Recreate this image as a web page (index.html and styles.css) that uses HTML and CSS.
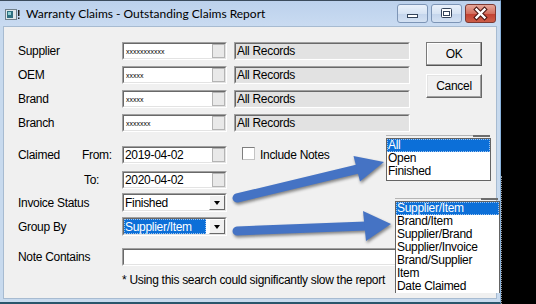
FILE: index.html
```html
<!DOCTYPE html>
<html lang="en">
<head>
    <meta charset="UTF-8">
    <title>Warranty Claims - Outstanding Claims Report</title>
    <link rel="stylesheet" href="styles.css">
</head>
<body>
    <div class="window">
        <div class="titlebar">
            <svg class="app-icon" width="16" height="12" viewBox="0 0 16 12">
                <rect x="0.5" y="0.5" width="11" height="10" fill="#dfe6ea" stroke="#6f7f8a"/>
                <rect x="2" y="2" width="6" height="7" fill="#2f6f80"/>
                <rect x="3" y="3" width="3" height="3" fill="#8fd0d4"/>
                <rect x="13" y="1" width="1.5" height="6" fill="#222"/>
                <rect x="13" y="8.5" width="1.5" height="1.5" fill="#222"/>
            </svg>
            <span class="title">Warranty Claims - Outstanding Claims Report</span>
            <div class="caption">
                <span class="cap-btn">
                    <svg width="29" height="17" viewBox="0 0 29 17"><rect x="9.5" y="9.5" width="10" height="3" fill="#fff" stroke="#33435a"/></svg>
                </span>
                <span class="cap-btn">
                    <svg width="29" height="17" viewBox="0 0 29 17"><rect x="9.5" y="3.5" width="10" height="9" rx="1" fill="#fff" stroke="#33435a"/><rect x="11.5" y="6.5" width="6" height="4" fill="#fff" stroke="#33435a"/></svg>
                </span>
                <span class="cap-btn close">
                    <svg width="29" height="17" viewBox="0 0 29 17"><path d="M10.5 4.5 L18.5 12.5 M18.5 4.5 L10.5 12.5" stroke="#4a1712" stroke-width="4.5" stroke-linecap="square"/><path d="M10.5 4.5 L18.5 12.5 M18.5 4.5 L10.5 12.5" stroke="#fff" stroke-width="2.4" stroke-linecap="square"/></svg>
                </span>
            </div>
        </div>
        <div class="client">
            <div class="top">
                <div class="filters">
                    <div class="row">
                        <span class="label">Supplier</span>
                        <div class="sunken edit"><div class="inner"><span class="mask">xxxxxxxxxxx</span><span class="pick"></span></div></div>
                        <div class="sunken records"><div class="inner">All Records</div></div>
                    </div>
                    <div class="row">
                        <span class="label">OEM</span>
                        <div class="sunken edit"><div class="inner"><span class="mask">xxxxx</span><span class="pick"></span></div></div>
                        <div class="sunken records"><div class="inner">All Records</div></div>
                    </div>
                    <div class="row">
                        <span class="label">Brand</span>
                        <div class="sunken edit"><div class="inner"><span class="mask">xxxxx</span><span class="pick"></span></div></div>
                        <div class="sunken records"><div class="inner">All Records</div></div>
                    </div>
                    <div class="row">
                        <span class="label">Branch</span>
                        <div class="sunken edit"><div class="inner"><span class="mask">xxxxxxx</span><span class="pick"></span></div></div>
                        <div class="sunken records"><div class="inner">All Records</div></div>
                    </div>
                </div>
                <div class="buttons">
                    <div class="btn default">OK</div>
                    <div class="btn">Cancel</div>
                </div>
            </div>

            <div class="row claimed">
                <span class="label">Claimed</span>
                <span class="sub">From:</span>
                <div class="sunken edit"><div class="inner"><span class="value">2019-04-02</span><span class="pick"></span></div></div>
                <span class="check"></span>
                <span class="check-text">Include Notes</span>
            </div>
            <div class="row to-row">
                <span class="label"></span>
                <span class="sub">To:</span>
                <div class="sunken edit"><div class="inner"><span class="value">2020-04-02</span><span class="pick"></span></div></div>
            </div>

            <div class="row combo-row invoice">
                <span class="label">Invoice Status</span>
                <div class="sunken combo"><div class="inner"><span class="value">Finished</span><span class="drop"><i></i></span></div></div>
            </div>
            <div class="row combo-row group">
                <span class="label">Group By</span>
                <div class="sunken combo"><div class="inner"><span class="value selected">Supplier/Item</span><span class="drop"><i></i></span></div></div>
            </div>

            <div class="row note">
                <span class="label">Note Contains</span>
                <div class="sunken wide"><div class="inner"></div></div>
            </div>
            <p class="footnote">* Using this search could significantly slow the report</p>
        </div>
    </div>

    <svg class="arrows" width="536" height="304" viewBox="0 0 536 304">
        <g fill="#4573c4" stroke="#4573c4">
            <line x1="237" y1="198" x2="358" y2="169" stroke-width="9" stroke-linecap="round"/>
            <polygon points="353.5,156 384,162 360,181.5" stroke="none"/>
            <line x1="237" y1="231" x2="366" y2="226" stroke-width="9" stroke-linecap="round"/>
            <polygon points="363,211 391,224 366,241" stroke="none"/>
        </g>
    </svg>

    <span class="ghost status-ghost"></span>
    <ul class="droplist status-list">
        <li class="active">All</li>
        <li>Open</li>
        <li>Finished</li>
    </ul>

    <span class="ghost group-ghost"></span>
    <ul class="droplist group-list">
        <li class="active">Supplier/Item</li>
        <li>Brand/Item</li>
        <li>Supplier/Brand</li>
        <li>Supplier/Invoice</li>
        <li>Brand/Supplier</li>
        <li>Item</li>
        <li>Date Claimed</li>
    </ul>
    <span class="edge-dots"></span>
</body>
</html>
```

FILE: styles.css
```css
* {
    margin: 0;
    padding: 0;
    box-sizing: border-box;
}
body {
    position: relative;
    width: 536px;
    height: 304px;
    overflow: hidden;
    background: #000;
    font-family: "Liberation Sans", Arial, sans-serif;
    font-size: 12px;
    letter-spacing: -0.3px;
    color: #000;
}
.window {
    width: 501px;
    height: 304px;
    display: flex;
    flex-direction: column;
    background: #c8daee;
    border-top: 1px solid #3b4b5c;
    border-right: 1px solid #8ab3dd;
    border-bottom: 2px solid #2a566c;
}
.titlebar {
    height: 25px;
    flex: none;
    display: flex;
    align-items: center;
    padding: 0 4px 0 5px;
    background: linear-gradient(#bcd1ec, #c9dbf1);
}
.app-icon {
    flex: none;
    margin-top: 2px;
}
.title {
    margin-left: 5px;
    font-family: Lato, "Liberation Sans", sans-serif;
    font-size: 12px;
    letter-spacing: 0;
}
.caption {
    margin-left: auto;
    align-self: flex-start;
    margin-top: 3px;
    display: flex;
    gap: 3px;
}
.cap-btn {
    width: 31px;
    height: 19px;
    border: 1px solid #7d95b6;
    border-radius: 3px;
    background: linear-gradient(#eaf1fb, #d6e3f3 50%, #c3d4ec 51%, #d3e1f2);
}
.cap-btn svg {
    display: block;
}
.cap-btn.close {
    border-color: #7d3a33;
    background: linear-gradient(#e6a79a, #d3705f 50%, #c23f30 51%, #cd5e48);
}
.client {
    flex: 1;
    margin: 0 3px 3px 3px;
    background: #f0f0f0;
    border: 1px solid #a7bbd1;
    padding: 15px 0 0 14px;
    display: flex;
    flex-direction: column;
}
.top {
    display: flex;
}
.filters {
    display: flex;
    flex-direction: column;
    gap: 6px;
}
.row {
    display: flex;
    align-items: center;
    height: 18px;
}
.label {
    width: 104px;
    flex: none;
}
.sunken {
    flex: none;
    height: 100%;
    border: 1px solid;
    border-color: #a0a0a0 #fff #fff #a0a0a0;
}
.sunken .inner {
    height: 100%;
    display: flex;
    align-items: center;
    background: #fff;
    border: 1px solid;
    border-color: #696969 #e3e3e3 #e3e3e3 #696969;
}
.edit,
.combo {
    width: 105px;
}
.records {
    width: 176px;
    margin-left: 7px;
}
.records .inner {
    background: #e2e2e2;
    padding-left: 1px;
}
.wide {
    width: 288px;
}
.mask {
    font-family: "Liberation Sans", sans-serif;
    font-size: 7px;
    line-height: 7px;
    letter-spacing: 0;
    padding-left: 2px;
}
.pick {
    margin-left: auto;
    width: 13px;
    height: 100%;
    background: #e9e9e9;
    border: 1px solid #b4b4b4;
}
.value {
    padding-left: 1px;
    white-space: nowrap;
}
.buttons {
    display: flex;
    flex-direction: column;
    gap: 8px;
    margin-left: 16px;
}
.btn {
    width: 56px;
    height: 24px;
    display: flex;
    align-items: center;
    justify-content: center;
    background: #f0f0f0;
    border: 1px solid;
    border-color: #fff #696969 #696969 #fff;
    box-shadow: inset -1px -1px #a0a0a0, inset 1px 1px #e3e3e3;
}
.btn.default {
    border-color: #7a7a7a #555 #555 #7a7a7a;
    box-shadow: inset -1px -1px #a0a0a0, inset 1px 1px #fff;
}
.claimed {
    margin-top: 14px;
}
.claimed .label {
    width: 64px;
}
.claimed .sub {
    width: 40px;
}
.to-row {
    margin-top: 7px;
}
.to-row .label {
    width: 66px;
}
.to-row .sub {
    width: 38px;
}
.check {
    width: 13px;
    height: 13px;
    margin-left: 15px;
    align-self: flex-start;
    margin-top: 1px;
    background: #fff;
    border: 1px solid;
    border-color: #7e7e7e #c4c4c4 #c4c4c4 #7e7e7e;
}
.check-text {
    margin-left: 5px;
}
.combo-row {
    height: 19px;
}
.invoice {
    margin-top: 4px;
}
.group {
    margin-top: 5px;
}
.drop {
    margin-left: auto;
    width: 16px;
    height: 100%;
    display: flex;
    align-items: center;
    justify-content: center;
    background: #f0f0f0;
    border: 1px solid;
    border-color: #fff #696969 #696969 #fff;
}
.drop i {
    width: 0;
    height: 0;
    border-left: 3.5px solid transparent;
    border-right: 3.5px solid transparent;
    border-top: 4px solid #000;
}
.value.selected {
    width: 82px;
    height: 100%;
    display: flex;
    align-items: center;
    background: #0c6fd8;
    color: #fff;
    outline: 1px dotted #9cc3ee;
    outline-offset: -1px;
}
.note {
    margin-top: 12px;
}
.footnote {
    margin-top: 6px;
    padding-left: 104px;
    line-height: 16px;
}
.arrows {
    position: absolute;
    left: 0;
    top: 0;
    filter: drop-shadow(1px 2px 1.5px rgba(0, 0, 0, 0.45));
}
.droplist {
    position: absolute;
    list-style: none;
    background: #fff;
    border: 1px solid #646464;
}
.droplist li {
    height: 13px;
    line-height: 13px;
    padding-left: 1px;
    white-space: nowrap;
}
.droplist li.active {
    background: #0c6fd8;
    color: #fff;
    outline: 1px dotted #9cc3ee;
    outline-offset: -1px;
}
.status-list {
    left: 386px;
    top: 138px;
    width: 105px;
    height: 43px;
}
.group-list {
    left: 395px;
    top: 201px;
    width: 105px;
    height: 92px;
    border-bottom: none;
    overflow: hidden;
}
.ghost {
    position: absolute;
    height: 2px;
    border-top: 1px solid #b4b4b4;
}
.ghost::after {
    content: "";
    position: absolute;
    right: 0;
    top: -1px;
    width: 17px;
    height: 2px;
    background: #6d6d6d;
}
.status-ghost {
    left: 386px;
    top: 135px;
    width: 104px;
}
.group-ghost {
    left: 395px;
    top: 198px;
    width: 103px;
}
.edge-dots {
    position: absolute;
    left: 501px;
    top: 176px;
    height: 128px;
    border-left: 1px dotted #9a9a9a;
}
```
